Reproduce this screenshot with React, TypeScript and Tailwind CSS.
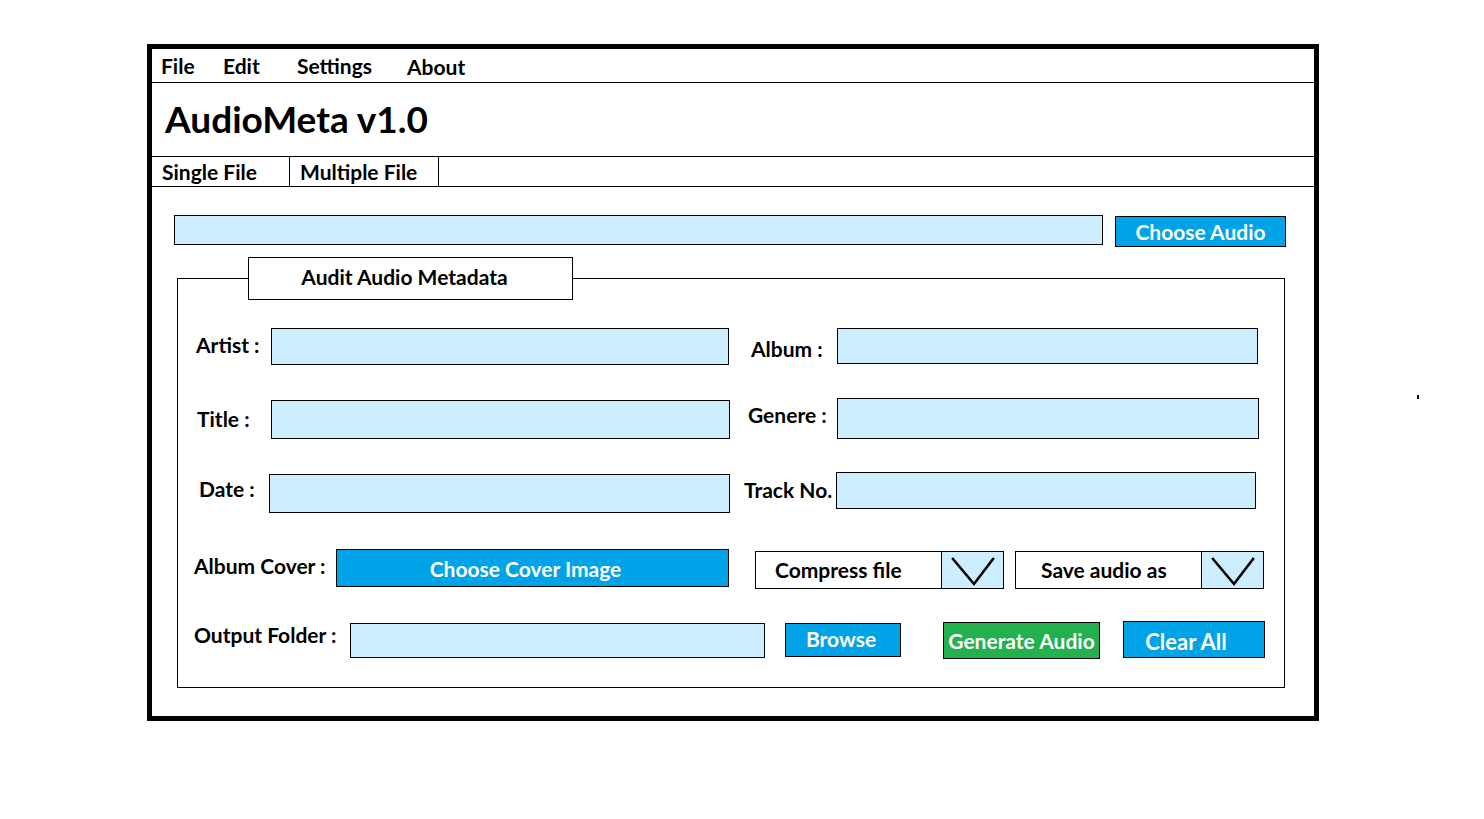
import React from "react";

const LB = "bg-[#cceeff] border border-black";

function Chevron() {
  return (
    <svg width="61" height="36" viewBox="0 0 61 36" className="block">
      <polyline points="11,7 32,32 51,7" fill="none" stroke="#000" strokeWidth="2.6" strokeLinecap="square" strokeLinejoin="miter" />
    </svg>
  );
}

function Dropdown({ label, pl }: { label: string; pl: string }) {
  return (
    <div className="mt-[2px] w-[249px] h-[38px] border border-black flex bg-white">
      <div className={`flex-1 flex items-center text-[21px] ${pl}`}>{label}</div>
      <div className="w-[62px] h-full border-l border-black bg-[#cceeff]">
        <Chevron />
      </div>
    </div>
  );
}

export default function App() {
  return (
    <div className="relative w-[1484px] h-[819px] bg-white font-['Lato',sans-serif] font-bold text-black pl-[147px] pt-[44px]">
      <div className="w-[1172px] h-[677px] border-[5px] border-black flex flex-col">
        {/* menu bar */}
        <div className="h-[34px] border-b border-black flex items-center text-[21px] leading-none">
          <div className="w-[71px] pl-[9px]">File</div>
          <div className="w-[74px]">Edit</div>
          <div className="w-[110px]">Settings</div>
          <div className="mt-[2px]">About</div>
        </div>
        {/* title */}
        <div className="h-[74px] border-b border-black flex items-center pl-[13px] pb-[2px]">
          <h1 className="text-[37px] leading-none">AudioMeta v1.0</h1>
        </div>
        {/* tabs */}
        <div className="h-[30px] border-b border-black flex text-[21px]">
          <div className="w-[138px] border-r border-black pl-[10px] flex items-center">Single File</div>
          <div className="w-[149px] border-r border-black pl-[10px] flex items-center">Multiple File</div>
        </div>

        {/* choose audio row */}
        <div className="mt-[28px] flex items-start">
          <div className={`ml-[22px] w-[929px] h-[30px] ${LB}`} />
          <button className="ml-[12px] mt-px w-[171px] h-[31px] bg-[#00a2e8] border border-black text-white text-[21px] leading-none flex items-center justify-center">
            Choose Audio
          </button>
        </div>

        {/* fieldset */}
        <fieldset className="mt-[10px] ml-[25px] w-[1108px] border border-black pb-[28px]">
          <legend className="ml-[70px] w-[325px] h-[43px] border border-black bg-white flex items-center justify-center pr-[12px] pb-[3px] text-[21px]">
            Audit Audio Metadata
          </legend>

          {/* row 1 */}
          <div className="mt-[28px] h-[37px] flex items-start text-[21px]">
            <div className="w-[93px] pl-[18px] leading-[34px]">Artist :</div>
            <div className={`w-[458px] h-[37px] ${LB}`} />
            <div className="w-[108px] pl-[22px] leading-[42px]">Album :</div>
            <div className={`w-[421px] h-[36px] ${LB}`} />
          </div>

          {/* row 2 */}
          <div className="mt-[33px] h-[41px] flex items-start text-[21px]">
            <div className="w-[93px] pl-[19px] leading-[42px]">Title :</div>
            <div className={`mt-[2px] w-[459px] h-[39px] ${LB}`} />
            <div className="w-[107px] pl-[18px] leading-[34px]">Genere :</div>
            <div className={`w-[422px] h-[41px] ${LB}`} />
          </div>

          {/* row 3 */}
          <div className="mt-[33px] h-[41px] flex items-start text-[21px]">
            <div className="w-[91px] pl-[21px] leading-[34px]">Date :</div>
            <div className={`mt-[2px] w-[461px] h-[39px] ${LB}`} />
            <div className="w-[106px] pl-[14px] leading-[36px]">Track No.</div>
            <div className={`w-[420px] h-[37px] ${LB}`} />
          </div>

          {/* row 4 */}
          <div className="mt-[36px] h-[40px] flex items-start text-[21px]">
            <div className="w-[158px] pl-[16px] leading-[34px]">Album Cover :</div>
            <button className="w-[393px] h-[38px] bg-[#00a2e8] border border-black text-white text-[21px] leading-none flex items-center justify-center pr-[14px]">
              Choose Cover Image
            </button>
            <div className="w-[26px]" />
            <Dropdown label="Compress file" pl="pl-[19px]" />
            <div className="w-[11px]" />
            <Dropdown label="Save audio as" pl="pl-[25px]" />
          </div>

          {/* row 5 */}
          <div className="mt-[32px] h-[38px] flex items-start text-[21px]">
            <div className="w-[172px] pl-[16px] leading-[28px]">Output Folder :</div>
            <div className={`mt-[2px] w-[415px] h-[35px] ${LB}`} />
            <div className="w-[20px]" />
            <button className="mt-[2px] w-[116px] h-[34px] bg-[#00a2e8] border border-black text-white text-[21px] leading-none flex items-center justify-center pb-[3px] pr-[4px]">
              Browse
            </button>
            <div className="w-[42px]" />
            <button className="mt-px w-[157px] h-[37px] bg-[#22b14c] border border-black text-white text-[21px] leading-none flex items-center justify-center pb-[1px]">
              Generate Audio
            </button>
            <div className="w-[23px]" />
            <button className="w-[142px] h-[37px] bg-[#00a2e8] border border-black text-white text-[22px] leading-none flex items-center justify-center pt-[4px] pr-[16px]">
              Clear All
            </button>
          </div>
        </fieldset>
      </div>
      <span className="absolute left-[1417px] top-[395px] w-[2px] h-[4px] bg-black" />
    </div>
  );
}
